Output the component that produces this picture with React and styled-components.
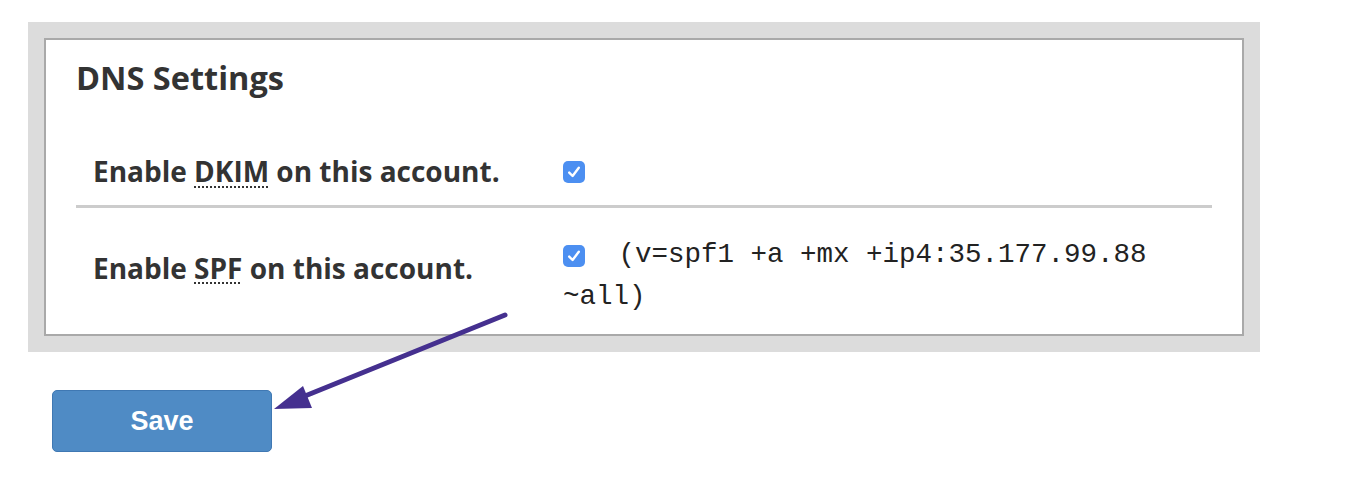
import React from 'react'
import styled, { createGlobalStyle } from 'styled-components'

const GlobalStyle = createGlobalStyle`
  html, body {
    margin: 0;
    padding: 0;
    background: #ffffff;
  }
  body {
    font-family: "Open Sans", "Liberation Sans", sans-serif;
    color: #333333;
  }
`

const Page = styled.div`
  position: relative;
  width: 1348px;
  height: 480px;
  padding: 22px 0 0 28px;
  box-sizing: border-box;
`

const Frame = styled.div`
  width: 1232px;
  box-sizing: border-box;
  padding: 16px;
  background: #dcdcdc;
`

const Panel = styled.section`
  background: #ffffff;
  border: 2px solid #a9a9a9;
  padding: 19px 30px 7px 30px;
`

const Title = styled.h2`
  margin: 0 0 33px 0;
  font-size: 32.5px;
  line-height: 38px;
  font-weight: 700;
  color: #333333;
`

const Table = styled.table`
  width: 100%;
  border-collapse: collapse;
`

const Row = styled.tr`
  border-bottom: ${p => (p.$divider ? '3px solid #cccccc' : 'none')};
`

const Label = styled.th`
  width: 438px;
  padding: ${p => (p.$tall ? '20px 16px 13px 17px' : '16px 16px 16px 17px')};
  text-align: left;
  vertical-align: middle;
  font-size: 28px;
  line-height: 42px;
  font-weight: 700;
  color: #333333;
`

const Value = styled.td`
  padding: ${p => (p.$shift ? '26px 16px 9px 16px' : '20px 16px 13px 16px')};
  vertical-align: middle;
  font-family: "Liberation Mono", "Courier New", monospace;
  font-size: 27.5px;
  line-height: 42px;
  color: #222222;
`

const Abbr = styled.abbr`
  text-decoration: underline dotted #333333;
  text-decoration-thickness: 2px;
  text-underline-offset: 4px;
  cursor: help;
`

const Check = styled.span`
  display: inline-flex;
  align-items: center;
  justify-content: center;
  width: 22px;
  height: 22px;
  margin-right: ${p => (p.$gap ? '17px' : '0')};
  border-radius: 5px;
  background: #4c8ff1;
  vertical-align: -2px;

  svg {
    width: 16px;
    height: 16px;
  }
`

const Actions = styled.div`
  padding: 38px 0 0 24px;
`

const SaveButton = styled.button`
  width: 220px;
  height: 62px;
  border: 1px solid #3f78b3;
  border-radius: 5px;
  background: #4f8bc5;
  color: #ffffff;
  font-family: "Liberation Sans", Arial, sans-serif;
  font-size: 27px;
  font-weight: 700;
  cursor: pointer;
`

const Arrow = styled.svg`
  position: absolute;
  top: 0;
  left: 0;
  pointer-events: none;
`

const CheckBox = ({ gap }) => (
  <Check $gap={gap}>
    <svg viewBox="0 0 16 16">
      <path d="M3.2 8.6 L6.6 12 L12.8 3.8" fill="none" stroke="#ffffff" strokeWidth="2.4" strokeLinecap="round" strokeLinejoin="round" />
    </svg>
  </Check>
)

export default function App() {
  return (
    <>
      <GlobalStyle />
      <Page>
        <Frame>
          <Panel>
            <Title>DNS Settings</Title>
            <Table>
              <tbody>
                <Row $divider>
                  <Label $tall>Enable <Abbr title="DomainKeys Identified Mail">DKIM</Abbr> on this account.</Label>
                  <Value><CheckBox /></Value>
                </Row>
                <Row>
                  <Label>Enable <Abbr title="Sender Policy Framework">SPF</Abbr> on this account.</Label>
                  <Value $shift><CheckBox gap /> (v=spf1 +a +mx +ip4:35.177.99.88 ~all)</Value>
                </Row>
              </tbody>
            </Table>
          </Panel>
        </Frame>
        <Actions>
          <SaveButton>Save</SaveButton>
        </Actions>
        <Arrow width="1348" height="480" viewBox="0 0 1348 480">
          <line x1="505" y1="315" x2="300" y2="398" stroke="#45308f" strokeWidth="5" strokeLinecap="round" />
          <polygon points="274,409 303,386 312,408" fill="#45308f" />
        </Arrow>
      </Page>
    </>
  )
}
